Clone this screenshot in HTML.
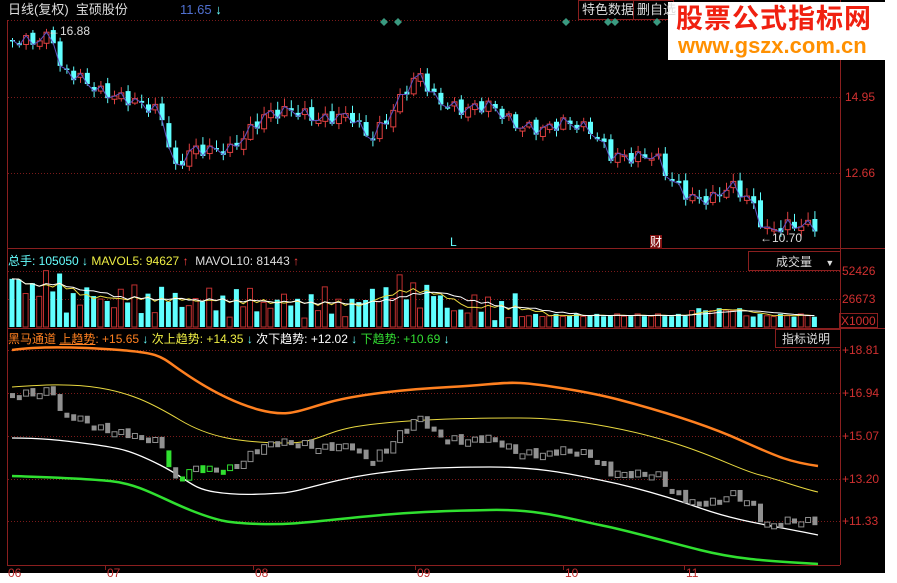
<!DOCTYPE html>
<html><head><meta charset="utf-8"><style>
body{margin:0;background:#fff;width:897px;height:583px;overflow:hidden;font-family:"Liberation Sans","Noto Sans CJK SC",sans-serif}
#c{position:absolute;left:0;top:0;width:885px;height:573px;background:#000}
svg{position:absolute;left:0;top:0}
.t{position:absolute;font-size:12px;white-space:nowrap;line-height:14px}
</style></head><body>
<div id="c"></div>
<svg id="s" width="897" height="583" xmlns="http://www.w3.org/2000/svg">
<g stroke="#8a1f1f" fill="none">
<line x1="7.5" y1="20" x2="7.5" y2="565"/>
<line x1="840.5" y1="0" x2="840.5" y2="565"/>
<line x1="7" y1="248.5" x2="885" y2="248.5"/>
<line x1="7" y1="328.5" x2="885" y2="328.5"/>
<line x1="7" y1="565.5" x2="840" y2="565.5"/>
<rect x="748.5" y="251.5" width="92" height="19"/>
<rect x="775.5" y="329.5" width="65" height="18"/>
<rect x="578.5" y="0.5" width="55" height="19"/>
<rect x="633.5" y="0.5" width="40" height="19"/>
<rect x="839.5" y="313.5" width="38" height="14"/>
</g>
<g stroke="#7a1a1a" stroke-dasharray="1,2">
<line x1="8" y1="20.5" x2="840" y2="20.5"/>
<line x1="8" y1="97.5" x2="840" y2="97.5"/>
<line x1="8" y1="173.5" x2="840" y2="173.5"/>
<line x1="8" y1="271.5" x2="840" y2="271.5"/>
<line x1="8" y1="299.5" x2="840" y2="299.5"/>
<line x1="8" y1="350.5" x2="840" y2="350.5"/>
<line x1="8" y1="393.5" x2="840" y2="393.5"/>
<line x1="8" y1="436.5" x2="840" y2="436.5"/>
<line x1="8" y1="479.5" x2="840" y2="479.5"/>
<line x1="8" y1="521.5" x2="840" y2="521.5"/>
</g>
<g stroke="#8a1f1f">
<line x1="105.5" y1="565" x2="105.5" y2="570"/><line x1="253.5" y1="565" x2="253.5" y2="570"/><line x1="415.5" y1="565" x2="415.5" y2="570"/><line x1="563.5" y1="565" x2="563.5" y2="570"/><line x1="684.5" y1="565" x2="684.5" y2="570"/>
</g>
<g fill="#3a9a80">
<path d="M384 18l4 4-4 4-4-4z"/><path d="M398 18l4 4-4 4-4-4z"/><path d="M566 18l4 4-4 4-4-4z"/><path d="M608 18l4 4-4 4-4-4z"/><path d="M615 18l4 4-4 4-4-4z"/><path d="M657 18l4 4-4 4-4-4z"/>
</g>
<g fill="none" stroke-linejoin="round">
<path stroke="#ff8020" stroke-width="2.5" d="M12,350 C40,346 80,347 120,350 S160,356 180,370 S230,402 260,410 S300,410 330,402 S410,389 450,387 S500,382 520,383 S590,392 620,400 S700,422 740,440 S790,462 818,466"/>
<path stroke="#e8d840" stroke-width="1" d="M12,387 C40,385 70,383 100,388 S150,402 180,420 S240,442 280,443 S320,432 360,426 S460,418 520,418 S640,432 680,445 S740,470 760,475 S800,488 818,492"/>
<path stroke="#ffffff" stroke-width="1.3" d="M12,438 C40,438 60,440 90,444 S130,450 160,465 S190,488 215,492 S265,494 282,493 S320,483 360,476 S440,467 490,467 S570,474 600,480 S660,494 700,508 S770,525 818,535"/>
<path stroke="#30e030" stroke-width="2.5" d="M12,476 C40,477 80,478 110,481 S160,498 190,510 S230,523 260,524 S310,522 360,517 S440,511 490,510 S570,519 600,525 S660,540 700,550 S770,561 818,564"/>
</g>
<g id="g"></g>
<rect x="668" y="2" width="217" height="58" fill="#fff"/>
</svg>
<div class="t" style="left:8px;top:3px;color:#ddd;font-size:13px">日线(复权)&nbsp; 宝硕股份</div>
<div class="t" style="left:180px;top:3px;color:#5070d0;font-size:13px">11.65 <span style="color:#6ff">↓</span></div>
<div class="t" style="left:582px;top:3px;color:#ddd;font-size:13px">特色数据</div>
<div class="t" style="left:637px;top:3px;color:#ddd;font-size:13px">删自选</div>
<div class="t" style="left:676px;top:3px;color:#f02010;font-size:27px;line-height:32px;font-weight:bold;letter-spacing:1px">股票公式指标网</div>
<div class="t" style="left:678px;top:34px;color:#ff9000;font-size:22px;line-height:24px;font-weight:bold">www.gszx.com.cn</div>
<div class="t" style="left:48px;top:24px;color:#ddd">←16.88</div>
<div class="t" style="left:760px;top:231px;color:#ddd">←10.70</div>
<div class="t" style="left:450px;top:235px;color:#6ff">L</div>
<div class="t" style="left:650px;top:235px;color:#fff;background:#801010">财</div>
<div class="t" style="left:845px;top:90px;color:#d03030">14.95</div>
<div class="t" style="left:845px;top:166px;color:#d03030">12.66</div>
<div class="t" style="left:8px;top:254px"><span style="color:#6ff">总手: 105050 ↓</span> <span style="color:#ee4">MAVOL5: 94627</span><span style="color:#f44"> ↑</span> <span style="color:#ddd">&nbsp;MAVOL10: 81443</span><span style="color:#f44"> ↑</span></div>
<div class="t" style="left:776px;top:255px;color:#ddd">成交量 &nbsp; &nbsp;<span style="font-size:9px">▼</span></div>
<div class="t" style="left:842px;top:264px;color:#d03030">52426</div>
<div class="t" style="left:842px;top:292px;color:#d03030">26673</div>
<div class="t" style="left:841px;top:314px;color:#d03030">X1000</div>
<div class="t" style="left:8px;top:332px"><span style="color:#ff8020">黑马通道 <u>上趋势</u>: +15.65</span><span style="color:#6ff"> ↓</span> <span style="color:#ee4">次上趋势: +14.35</span><span style="color:#6ff"> ↓</span> <span style="color:#fff">次下趋势: +12.02</span><span style="color:#6ff"> ↓</span> <span style="color:#3d3">下趋势: +10.69</span><span style="color:#6ff"> ↓</span></div>
<div class="t" style="left:782px;top:332px;color:#ddd">指标说明</div>
<div class="t" style="left:842px;top:343px;color:#d03030">+18.81</div>
<div class="t" style="left:842px;top:386px;color:#d03030">+16.94</div>
<div class="t" style="left:842px;top:429px;color:#d03030">+15.07</div>
<div class="t" style="left:842px;top:472px;color:#d03030">+13.20</div>
<div class="t" style="left:842px;top:514px;color:#d03030">+11.33</div>
<div class="t" style="left:8px;top:566px;color:#c03030">06</div>
<div class="t" style="left:107px;top:566px;color:#c03030">07</div>
<div class="t" style="left:255px;top:566px;color:#c03030">08</div>
<div class="t" style="left:417px;top:566px;color:#c03030">09</div>
<div class="t" style="left:565px;top:566px;color:#c03030">10</div>
<div class="t" style="left:686px;top:566px;color:#c03030">11</div>
<script>
(function(){
var K=[[12,40],[30,42],[45,38],[52,34],[60,70],[75,75],[100,92],[130,100],[160,112],[175,170],[190,150],[230,150],[250,130],[265,115],[290,110],[320,120],[350,115],[370,140],[390,115],[405,90],[420,75],[435,100],[460,110],[490,105],[515,125],[540,130],[565,122],[590,130],[610,155],[630,158],[655,155],[670,180],[690,198],[710,200],[730,185],[750,200],[765,232],[790,225],[818,226]];
function yAt(x){for(var i=1;i<K.length;i++){if(x<=K[i][0]){var a=K[i-1],b=K[i];return a[1]+(b[1]-a[1])*(x-a[0])/(b[0]-a[0]);}}return K[K.length-1][1];}
var h='',pl=[],prev=40,vol=[],S=6.8,N=119;
for(var i=0;i<N;i++){var x=12+i*S;var c=yAt(x)+Math.sin(i*2.3)*6;var o=prev+Math.sin(i*1.7)*3;prev=c;
var up=c<o;var tp=Math.min(o,c),bt=Math.max(o,c);if(bt-tp<1.5)bt=tp+1.5;var hi=tp-2-Math.abs(Math.sin(i*3.1))*6,lo=bt+1+Math.abs(Math.cos(i*1.3))*5;
var col=up?'#e04040':'#60ffff';
h+='<line x1="'+(x+.5)+'" y1="'+hi+'" x2="'+(x+.5)+'" y2="'+lo+'" stroke="'+col+'"/>';
h+='<rect x="'+(x-2)+'" y="'+tp+'" width="5" height="'+(bt-tp)+'" '+(up?'fill="#000" stroke="'+col+'"':'fill="'+col+'"')+'/>';
pl.push(x+.5+','+c);
var p=14.95-(c-97)/33.2,po=14.95-(o-97)/33.2;var y1=350+(18.81-p)*22.9-6,y2=350+(18.81-po)*22.9-6;var t2=Math.min(y1,y2),b2=Math.max(y1,y2);if(b2-t2<5)b2=t2+5;
var wl=438+(535-438)*(x-12)/806;var g=(b2>wl+6&&i%3!=0);var gc=g?'#30e030':'#909090';
h+='<rect x="'+(x-2)+'" y="'+t2+'" width="5" height="'+(b2-t2)+'" '+(up?'fill="#000" stroke="'+gc+'"':'fill="'+gc+'"')+'/>';
var base=0.55-(x/818)*0.35;if(x>370&&x<440)base+=0.25;if(x<60)base+=0.2;var v=Math.max(0.12,base+Math.sin(i*2.9)*0.2+Math.cos(i*1.1)*0.1);if(x>520)v=0.15+Math.abs(Math.sin(i*2.1))*0.08+(x>690&&x<740?0.1:0);
vol.push(v);var vh=v*57;
h+='<rect x="'+(x-2.5)+'" y="'+(327-vh)+'" width="5" height="'+vh+'" '+(up?'fill="#000" stroke="#c03030"':'fill="#60ffff"')+'/>';}
h+='<polyline fill="none" stroke="#6050c0" points="'+pl.join(' ')+'"/>';
function ma(n,col){var pts=[];for(var i=0;i<vol.length;i++){var s=0,k=0;for(var j=Math.max(0,i-n+1);j<=i;j++){s+=vol[j];k++;}pts.push((12+i*S)+','+(327-s/k*57));}return '<polyline fill="none" stroke="'+col+'" points="'+pts.join(' ')+'"/>';}
h+=ma(5,'#e8d840')+ma(10,'#ffffff');
document.getElementById('g').innerHTML=h;
})();
</script>
</body></html>
